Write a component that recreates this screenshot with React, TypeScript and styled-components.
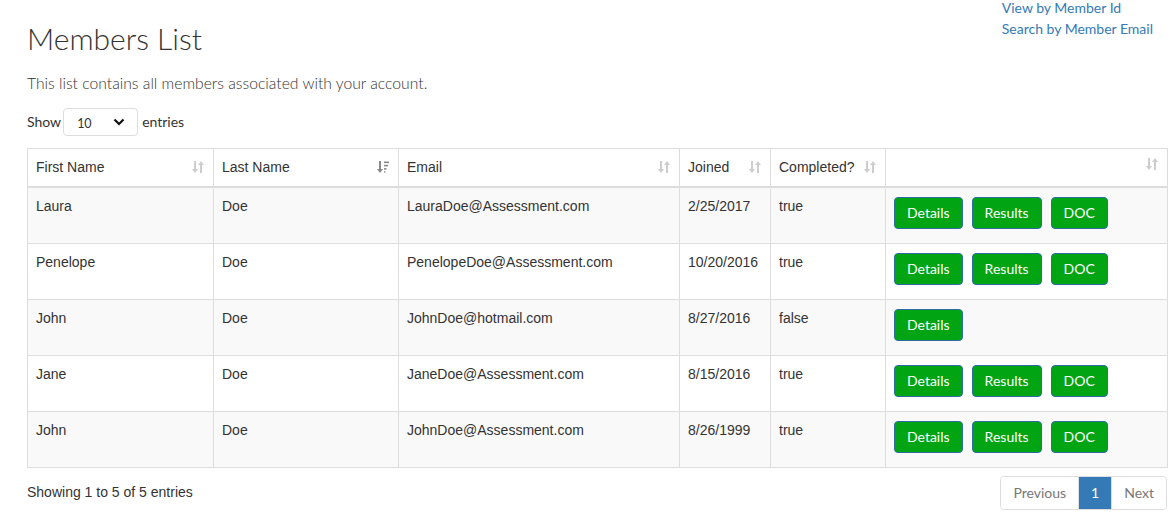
import { memo } from 'react';

import styled, { createGlobalStyle } from 'styled-components';

type Member = {
  first: string;
  last: string;
  email: string;
  joined: string;
  completed: boolean;
};

const members: Member[] = [
  { first: 'Laura', last: 'Doe', email: 'LauraDoe@Assessment.com', joined: '2/25/2017', completed: true },
  { first: 'Penelope', last: 'Doe', email: 'PenelopeDoe@Assessment.com', joined: '10/20/2016', completed: true },
  { first: 'John', last: 'Doe', email: 'JohnDoe@hotmail.com', joined: '8/27/2016', completed: false },
  { first: 'Jane', last: 'Doe', email: 'JaneDoe@Assessment.com', joined: '8/15/2016', completed: true },
  { first: 'John', last: 'Doe', email: 'JohnDoe@Assessment.com', joined: '8/26/1999', completed: true },
];

const columns = [
  { label: 'First Name', width: 186 },
  { label: 'Last Name', width: 185, sorted: true },
  { label: 'Email', width: 281 },
  { label: 'Joined', width: 91 },
  { label: 'Completed?', width: 115 },
  { label: '', width: 282 },
];

const SortIcon = ({ sorted }: { sorted?: boolean }) =>
  sorted ? (
    <svg width="13" height="14" viewBox="0 0 13 14">
      <g fill="#8a8a8a">
        <rect x="2" y="1" width="2" height="9" />
        <polygon points="0,9 6,9 3,13" />
        <rect x="7" y="1.5" width="5" height="1.6" />
        <rect x="7" y="4.8" width="4" height="1.6" />
        <rect x="7" y="8.1" width="2.5" height="1.6" />
        <rect x="7" y="11.2" width="1.4" height="1.4" />
      </g>
    </svg>
  ) : (
    <svg width="13" height="14" viewBox="0 0 13 14">
      <g fill="#cdcdcd">
        <rect x="2" y="1" width="2" height="9" />
        <polygon points="0,9 6,9 3,13" />
        <rect x="8" y="4" width="2" height="9" />
        <polygon points="6,5 12,5 9,1" />
      </g>
    </svg>
  );

const Chevron = () => (
  <svg width="12" height="8" viewBox="0 0 12 8">
    <polyline points="1.5,1.5 6,6 10.5,1.5" fill="none" stroke="#111" strokeWidth="2.2" />
  </svg>
);

const App = () => {
  return (
    <Page>
      <GlobalStyle />
      <Header>
        <div>
          <Title>Members List</Title>
          <Lead>This list contains all members associated with your account.</Lead>
        </div>
        <Links>
          <a href="#">View by Member Id</a>
          <a href="#">Search by Member Email</a>
        </Links>
      </Header>

      <LengthRow>
        Show
        <FakeSelect>
          <span>10</span>
          <Chevron />
        </FakeSelect>
        entries
      </LengthRow>

      <Table>
        <colgroup>
          {columns.map((c, i) => (
            <col key={i} style={{ width: c.width }} />
          ))}
        </colgroup>
        <thead>
          <tr>
            {columns.map((c, i) => (
              <th key={i}>
                <HeadCell>
                  <span>{c.label}</span>
                  <SortIcon sorted={c.sorted} />
                </HeadCell>
              </th>
            ))}
          </tr>
        </thead>
        <tbody>
          {members.map((m, i) => (
            <tr key={i}>
              <td>{m.first}</td>
              <td>{m.last}</td>
              <td>{m.email}</td>
              <td>{m.joined}</td>
              <td>{m.completed ? 'true' : 'false'}</td>
              <td>
                <Actions>
                  <GreenButton>Details</GreenButton>
                  {m.completed && <GreenButton>Results</GreenButton>}
                  {m.completed && <GreenButton>DOC</GreenButton>}
                </Actions>
              </td>
            </tr>
          ))}
        </tbody>
      </Table>

      <Footer>
        <Info>Showing 1 to 5 of 5 entries</Info>
        <Pager>
          <PageItem>Previous</PageItem>
          <PageItem $active>1</PageItem>
          <PageItem>Next</PageItem>
        </Pager>
      </Footer>
    </Page>
  );
};

export default memo(App);

const GlobalStyle = createGlobalStyle`
  html, body {
    margin: 0;
    padding: 0;
    background: #fff;
  }
  body {
    font-family: Lato, "Liberation Sans", Arial, sans-serif;
    font-size: 14px;
    line-height: 1.42857;
    color: #333;
  }
`;

const Page = styled.div`
  padding: 0 6px 0 27px;
`;

const Header = styled.div`
  display: flex;
  justify-content: space-between;
  align-items: flex-start;
`;

const Title = styled.h1`
  margin: 22px 0 0 0;
  font-size: 30px;
  font-weight: 300;
  line-height: 33px;
  color: #333;
`;

const Lead = styled.p`
  margin: 17px 0 0 0;
  font-size: 15.7px;
  font-weight: 300;
  line-height: 23px;
  color: #333;
`;

const Links = styled.div`
  display: flex;
  flex-direction: column;
  margin-right: 14px;
  margin-top: -3px;
  line-height: 21px;
  a {
    color: #337ab7;
    text-decoration: none;
    font-size: 14px;
  }
`;

const LengthRow = styled.div`
  display: flex;
  align-items: center;
  gap: 2px;
  margin-top: 13px;
  font-size: 14px;
`;

const FakeSelect = styled.div`
  box-sizing: border-box;
  width: 75px;
  height: 28px;
  margin: 0 2px 0 0;
  border: 1px solid #ddd;
  border-radius: 4px;
  display: flex;
  align-items: center;
  justify-content: space-between;
  padding: 0 12px 0 13px;
  font-size: 12.5px;
  span {
    padding-top: 3px;
  }
`;

const Table = styled.table`
  width: 1140px;
  margin-top: 12px;
  table-layout: fixed;
  border-collapse: collapse;
  font-family: "Liberation Sans", Arial, sans-serif;
  font-size: 14px;
  color: #333;
  th,
  td {
    border: 1px solid #ddd;
    padding: 8px;
    text-align: left;
    vertical-align: top;
    line-height: 20px;
  }
  th {
    font-weight: normal;
    padding-bottom: 9px;
    border-bottom: 2px solid #ddd;
  }
  tbody tr:nth-child(odd) {
    background: #f9f9f9;
  }
`;

const HeadCell = styled.div`
  display: flex;
  justify-content: space-between;
  align-items: center;
`;

const Actions = styled.div`
  display: flex;
  gap: 9px;
  height: 39px;
  padding-top: 1px;
  box-sizing: border-box;
`;

const GreenButton = styled.button`
  height: 32px;
  padding: 0 12px;
  border: 1px solid #2e6da4;
  border-radius: 4px;
  background: #01a412;
  color: #fff;
  font-family: Lato, "Liberation Sans", Arial, sans-serif;
  font-size: 14px;
  line-height: 20px;
  cursor: pointer;
`;

const Footer = styled.div`
  width: 1140px;
  display: flex;
  justify-content: space-between;
  align-items: center;
  margin-top: 8px;
`;

const Info = styled.div`
  font-family: "Liberation Sans", Arial, sans-serif;
  font-size: 14px;
  color: #333;
`;

const Pager = styled.div`
  display: flex;
  border: 1px solid #ddd;
  border-radius: 4px;
  overflow: hidden;
`;

const PageItem = styled.div<{ $active?: boolean }>`
  padding: 6px 12px;
  line-height: 20px;
  font-size: 14px;
  color: ${(p) => (p.$active ? '#fff' : '#777')};
  background: ${(p) => (p.$active ? '#337ab7' : '#fff')};
  & + & {
    border-left: 1px solid #ddd;
  }
`;
